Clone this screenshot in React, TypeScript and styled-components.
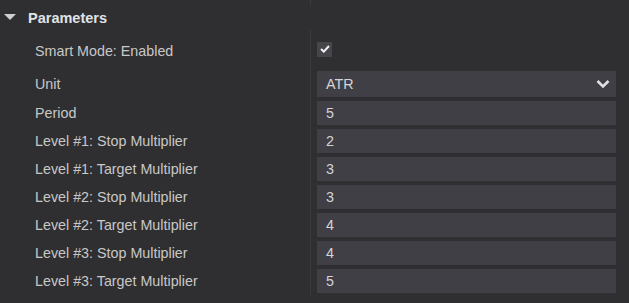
import styled, { createGlobalStyle } from "styled-components";

const GlobalStyle = createGlobalStyle`
    html, body {
        margin: 0;
        padding: 0;
        background: #2f2f31;
    }
    body {
        font-family: "Liberation Sans", Arial, sans-serif;
        font-size: 14.3px;
        color: #c8c8c8;
    }
`

const Panel = styled.div`
    width: 629px;
    height: 303px;
    background: #2f2f31;
    overflow: hidden;
    box-sizing: border-box;
`

const PrevTail = styled.div`
    height: 5px;
    margin-left: 310px;
    border-left: 1px solid #3b3b3e;
`

const Header = styled.div`
    display: flex;
    align-items: center;
    height: 25px;
    padding-left: 4px;
    font-weight: bold;
    font-size: 14.5px;
    color: #e2e2e6;
`

const Caret = styled.span`
    width: 0;
    height: 0;
    border-left: 6px solid transparent;
    border-right: 6px solid transparent;
    border-top: 6px solid #cfcfd2;
    margin-right: 12px;
    margin-top: -1px;
`

const Table = styled.div`
    padding-bottom: 2px;
`

const Row = styled.div<{ $h: number }>`
    display: flex;
    height: ${p => p.$h}px;
`

const Label = styled.div<{ $shift?: number }>`
    width: 310px;
    box-sizing: border-box;
    padding-left: 35px;
    padding-top: ${p => p.$shift ?? 0}px;
    display: flex;
    align-items: center;
    white-space: nowrap;
`

const Value = styled.div`
    flex: 1;
    display: flex;
    align-items: center;
    border-left: 1px solid #3b3b3e;
    padding: 0 13px 0 6px;
`

const Check = styled.div`
    width: 15px;
    height: 15px;
    background: #45454a;
    display: flex;
    align-items: center;
    justify-content: center;
`

const Field = styled.div<{ $h: number }>`
    flex: 1;
    height: ${p => p.$h}px;
    background: #3f3f45;
    display: flex;
    align-items: center;
    justify-content: space-between;
    padding: 0 6px 0 9px;
    color: #d4d4d6;
`

const params = [
    ["Period", "5"],
    ["Level #1: Stop Multiplier", "2"],
    ["Level #1: Target Multiplier", "3"],
    ["Level #2: Stop Multiplier", "3"],
    ["Level #2: Target Multiplier", "4"],
    ["Level #3: Stop Multiplier", "4"],
    ["Level #3: Target Multiplier", "5"],
]

export default function App() {
    return <Panel>
        <GlobalStyle/>
        <PrevTail/>
        <Header>
            <Caret/>
            Parameters
        </Header>
        <Table>
            <Row $h={38}>
                <Label $shift={3}>Smart Mode: Enabled</Label>
                <Value>
                    <Check>
                        <svg width="10" height="8" viewBox="0 0 10 8">
                            <polyline points="1,4 3.8,6.6 9,1" fill="none" stroke="#f2f2f2" strokeWidth="2"/>
                        </svg>
                    </Check>
                </Value>
            </Row>
            <Row $h={31}>
                <Label $shift={1}>Unit</Label>
                <Value>
                    <Field $h={26}>
                        ATR
                        <svg width="14" height="10" viewBox="0 0 14 10">
                            <polyline points="1.5,2 7,7.5 12.5,2" fill="none" stroke="#e0e0e2" strokeWidth="2.6"/>
                        </svg>
                    </Field>
                </Value>
            </Row>
            {params.map(([name, value]) => (
                <Row $h={28} key={name}>
                    <Label>{name}</Label>
                    <Value>
                        <Field $h={24}>{value}</Field>
                    </Value>
                </Row>
            ))}
        </Table>
    </Panel>
}
